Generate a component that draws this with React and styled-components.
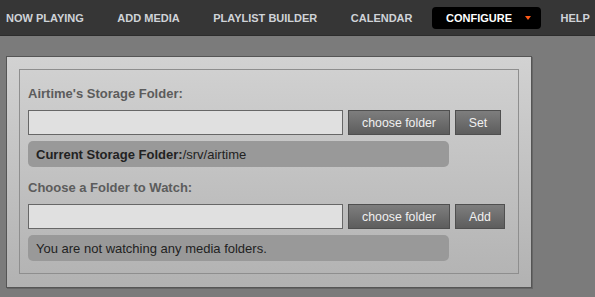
import React from "react";
import styled, { createGlobalStyle } from "styled-components";

const GlobalStyle = createGlobalStyle`
  html, body {
    margin: 0;
    padding: 0;
    background: #7b7b7b;
    font-family: "Liberation Sans", Arial, sans-serif;
  }
`;

const Page = styled.div`
  width: 595px;
  height: 297px;
  overflow: hidden;
  background: linear-gradient(#666 0, #777 6px, #7b7b7b 12px);
`;

const Nav = styled.nav`
  height: 35px;
  background: #363636;
  border-bottom: 1px solid #2c2c2c;
  display: flex;
  align-items: center;
  padding-left: 6px;
  gap: 33.5px;
  white-space: nowrap;
`;

const NavItem = styled.a`
  color: ${(props) => (props.active ? "#ffffff" : "#cfd3d8")};
  font-size: 11px;
  font-weight: bold;
  text-decoration: none;
  line-height: 22px;
  ${(props) =>
    props.active &&
    `
    background: #000;
    border-radius: 4px;
    margin: 0 -14px;
    padding: 0 10px 0 14px;
    display: flex;
    align-items: center;
  `}
`;

const Arrow = styled.span`
  display: inline-block;
  margin-left: 13px;
  width: 0;
  height: 0;
  border-left: 3.5px solid transparent;
  border-right: 3.5px solid transparent;
  border-top: 4px solid #ff5a17;
`;

const Content = styled.div`
  padding: 20px 0 0 6px;
`;

const Panel = styled.div`
  box-sizing: content-box;
  width: 500px;
  height: 206px;
  padding: 12px;
  border: 1px solid #555;
  box-shadow: 1px 1px 0 #666;
  background: linear-gradient(#d2d2d2, #b2b2b2);
`;

const Fieldset = styled.div`
  border: 1px solid #8e8e8e;
  padding: 16px 8px 12px 8px;
  height: 175px;
`;

const Label = styled.div`
  font-size: 13px;
  font-weight: bold;
  color: #5c5c5c;
  line-height: 15px;
  margin-bottom: 9px;
  margin-top: ${(props) => (props.spaced ? "13px" : "0")};
`;

const Row = styled.div`
  display: flex;
  gap: 5px;
`;

const Input = styled.input`
  width: 315px;
  height: 25px;
  box-sizing: border-box;
  border: 1px solid #676767;
  background: #e0e0e0;
  margin: 0;
  padding: 0 4px;
  outline: none;
`;

const Button = styled.button`
  height: 25px;
  box-sizing: border-box;
  width: ${(props) => props.w}px;
  border: 1px solid #4f4f4f;
  background: linear-gradient(#7e7e7e, #5d5d5d);
  color: #f0f0f0;
  font-family: "Liberation Sans", Arial, sans-serif;
  font-size: 12.3px;
  padding: 0;
  margin: 0;
`;

const Status = styled.div`
  width: 421px;
  height: 26px;
  margin-top: 6px;
  background: #999999;
  border-radius: 5px;
  padding-left: 8px;
  box-sizing: border-box;
  display: flex;
  align-items: center;
  font-size: 13px;
  color: #222;
`;

export default function App() {
  return (
    <>
      <GlobalStyle />
      <Page>
        <Nav>
          <NavItem>NOW PLAYING</NavItem>
          <NavItem>ADD MEDIA</NavItem>
          <NavItem>PLAYLIST BUILDER</NavItem>
          <NavItem>CALENDAR</NavItem>
          <NavItem active>
            CONFIGURE
            <Arrow />
          </NavItem>
          <NavItem>HELP</NavItem>
        </Nav>
        <Content>
          <Panel>
            <Fieldset>
              <Label>Airtime's Storage Folder:</Label>
              <Row>
                <Input />
                <Button w={102}>choose folder</Button>
                <Button w={46}>Set</Button>
              </Row>
              <Status>
                <b>Current Storage Folder:</b>/srv/airtime
              </Status>
              <Label spaced>Choose a Folder to Watch:</Label>
              <Row>
                <Input />
                <Button w={102}>choose folder</Button>
                <Button w={50}>Add</Button>
              </Row>
              <Status>You are not watching any media folders.</Status>
            </Fieldset>
          </Panel>
        </Content>
      </Page>
    </>
  );
}
